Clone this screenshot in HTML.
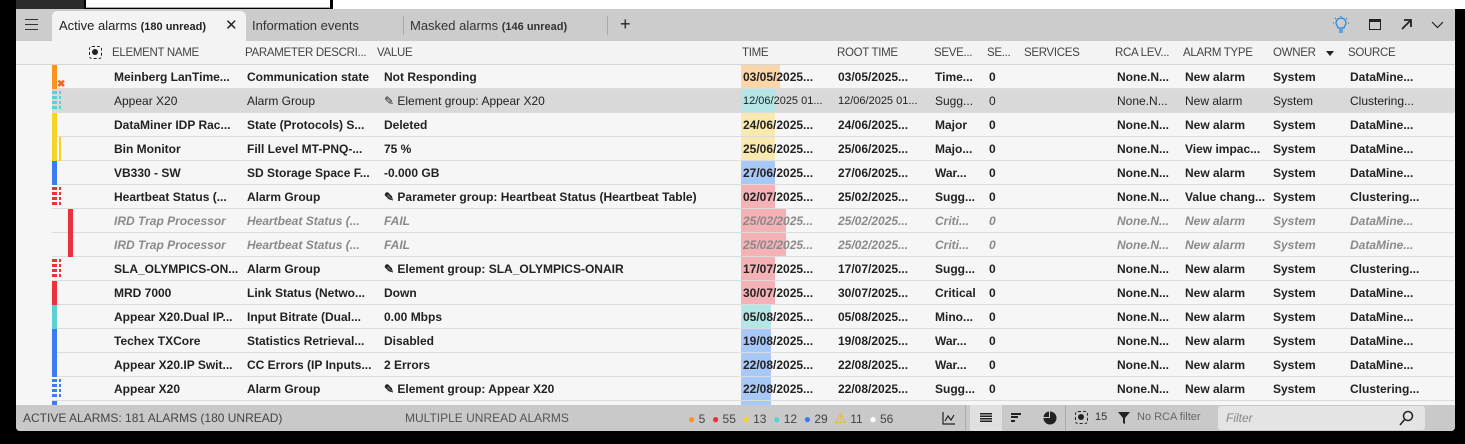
<!DOCTYPE html>
<html><head><meta charset="utf-8"><style>
*{box-sizing:border-box;margin:0;padding:0}
body{width:1465px;height:444px;background:#000;position:relative;overflow:hidden;font-family:"Liberation Sans",sans-serif;font-size:12px;color:#222}
.a{position:absolute;white-space:nowrap}
.row{position:absolute;left:52px;width:1403px;height:24px;border-bottom:1px solid #dcdcdc}
.row span{position:absolute;top:5px;white-space:nowrap}
.b span{font-weight:bold}
.i span{font-style:italic;color:#8a8a8a;font-weight:bold}
.hd{position:absolute;top:47px;color:#444;font-size:11.5px;letter-spacing:-0.3px}
.tb{position:absolute;top:0;height:23px;width:38px;left:689px}
.bar{position:absolute;left:0;top:0;width:5px;height:24px}
.dot{position:absolute;top:2px;width:5px;height:20px;background:repeating-linear-gradient(#000 0 3px,transparent 3px 5px)}
</style></head><body>
<div class="a" style="left:16px;top:0;width:68px;height:9px;background:#2b2b2b"></div>
<div class="a" style="left:86px;top:0;width:244px;height:8px;background:#fff;border-bottom:1px solid #aaa"></div>
<div class="a" style="left:333px;top:0;width:1132px;height:9px;background:#fff"></div>
<div class="a" style="left:16px;top:9px;width:1439px;height:422px;background:#f6f6f6;border-radius:0 0 4px 4px"></div>
<div class="a" style="left:16px;top:9px;width:1439px;height:32px;background:#cccccc"></div>
<div class="a" style="left:25px;top:19px;width:13px;height:11px;border-top:1px solid #333;border-bottom:1px solid #333"><div style="margin-top:4px;height:1px;background:#333"></div></div>
<div class="a" style="left:52px;top:11px;width:194px;height:30px;background:#f3f3f3;border-radius:5px 5px 0 0"></div>
<div class="a" style="left:59px;top:18px;font-size:13px;color:#222">Active alarms <b style="font-size:11px">(180 unread)</b></div>
<div class="a" style="left:225px;top:16px;font-size:15px;color:#222">✕</div>
<div class="a" style="left:252px;top:18px;font-size:13px;color:#333">Information events</div>
<div class="a" style="left:403px;top:16px;width:1px;height:19px;background:#aaa"></div>
<div class="a" style="left:410px;top:18px;font-size:13px;color:#333">Masked alarms <b style="font-size:11px">(146 unread)</b></div>
<div class="a" style="left:607px;top:16px;width:1px;height:19px;background:#aaa"></div>
<div class="a" style="left:620px;top:14px;font-size:18px;color:#222">+</div>
<svg class="a" style="left:1333px;top:16px" width="16" height="18" viewBox="0 0 16 18"><g stroke="#1e88e5" fill="none" stroke-width="1.2"><path d="M5 12c0-2-2-3-2-5a5 5 0 0 1 10 0c0 2-2 3-2 5z"/><path d="M6 14h4M6 16h4M1 7h-1M16 7h-1M2 2l1 1M14 2l-1 1M8 0v1"/></g></svg>
<div class="a" style="left:1369px;top:19px;width:12px;height:11px;border:1.5px solid #222;border-top-width:3px"></div>
<svg class="a" style="left:1400px;top:18px" width="12" height="12"><path d="M2 11L10 3M4 2h7v7" stroke="#222" fill="none" stroke-width="1.8"/></svg>
<svg class="a" style="left:1431px;top:21px" width="13" height="8"><path d="M1 1l5.5 5.5L12 1" stroke="#222" fill="none" stroke-width="1.2"/></svg>
<div class="a" style="left:16px;top:41px;width:1439px;height:24px;background:#f3f3f3;border-bottom:1px solid #d6d6d6"></div>
<div class="a" style="left:89px;top:46px;width:13px;height:13px;border:1.5px dashed #222;border-radius:3px"><div style="margin:2px;width:6px;height:6px;border-radius:50%;background:#222"></div></div>
<div class="hd" style="left:112px">ELEMENT NAME</div>
<div class="hd" style="left:245px">PARAMETER DESCRI...</div>
<div class="hd" style="left:377px">VALUE</div>
<div class="hd" style="left:742px">TIME</div>
<div class="hd" style="left:837px">ROOT TIME</div>
<div class="hd" style="left:934px">SEVE...</div>
<div class="hd" style="left:987px">SE...</div>
<div class="hd" style="left:1024px">SERVICES</div>
<div class="hd" style="left:1115px">RCA LEV...</div>
<div class="hd" style="left:1183px">ALARM TYPE</div>
<div class="hd" style="left:1273px">OWNER</div>
<div class="a" style="left:1326px;top:51px;border:4px solid transparent;border-top:5px solid #222"></div>
<div class="hd" style="left:1348px">SOURCE</div>

<div class="row b" style="top:65px"><div class="bar" style="background:#f7931e"></div><div class="a" style="left:5px;top:14px;color:#f26522;font-size:10px;font-weight:bold">✖</div><div class="tb" style="background:#fbd6a8;width:39px"></div><span style="left:62px">Meinberg LanTime...</span><span style="left:195px">Communication state</span><span style="left:332px">Not Responding</span><span style="left:691px">03/05/2025...</span><span style="left:786px">03/05/2025...</span><span style="left:883px">Time...</span><span style="left:937px">0</span><span style="left:1065px">None.N...</span><span style="left:1133px">New alarm</span><span style="left:1221px">System</span><span style="left:1298px">DataMine...</span></div>
<div class="row" style="top:89px;background:#d9d9d9"><div class="dot" style="left:0;background:repeating-linear-gradient(#5ed0d4 0 3px,transparent 3px 5px)"></div><div class="dot" style="left:7px;width:2px;background:repeating-linear-gradient(#5ed0d4 0 3px,transparent 3px 5px)"></div><div class="tb" style="background:#b4e6e6;width:35px"></div><span style="left:62px">Appear X20</span><span style="left:195px">Alarm Group</span><span style="left:332px">✎ Element group: Appear X20</span><span style="left:691px;font-size:11px;top:6px">12/06/2025 01...</span><span style="left:786px;font-size:11px;top:6px">12/06/2025 01...</span><span style="left:883px">Sugg...</span><span style="left:937px">0</span><span style="left:1065px">None.N...</span><span style="left:1133px">New alarm</span><span style="left:1221px">System</span><span style="left:1298px">Clustering...</span></div>
<div class="row b" style="top:113px"><div class="bar" style="background:#f5d327"></div><div class="tb" style="background:#f8e9b0;width:34px"></div><span style="left:62px">DataMiner IDP Rac...</span><span style="left:195px">State (Protocols) S...</span><span style="left:332px">Deleted</span><span style="left:691px">24/06/2025...</span><span style="left:786px">24/06/2025...</span><span style="left:883px">Major</span><span style="left:937px">0</span><span style="left:1065px">None.N...</span><span style="left:1133px">New alarm</span><span style="left:1221px">System</span><span style="left:1298px">DataMine...</span></div>
<div class="row b" style="top:137px"><div class="bar" style="background:#f5d327"></div><div class="bar" style="left:7px;width:2px;background:#f5d327"></div><div class="tb" style="background:#f8e9b0;width:34px"></div><span style="left:62px">Bin Monitor</span><span style="left:195px">Fill Level MT-PNQ-...</span><span style="left:332px">75 %</span><span style="left:691px">25/06/2025...</span><span style="left:786px">25/06/2025...</span><span style="left:883px">Majo...</span><span style="left:937px">0</span><span style="left:1065px">None.N...</span><span style="left:1133px">View impac...</span><span style="left:1221px">System</span><span style="left:1298px">DataMine...</span></div>
<div class="row b" style="top:161px"><div class="bar" style="background:#3d7cf0"></div><div class="tb" style="background:#a8c8f8;width:34px"></div><span style="left:62px">VB330 - SW</span><span style="left:195px">SD Storage Space F...</span><span style="left:332px">-0.000 GB</span><span style="left:691px">27/06/2025...</span><span style="left:786px">27/06/2025...</span><span style="left:883px">War...</span><span style="left:937px">0</span><span style="left:1065px">None.N...</span><span style="left:1133px">New alarm</span><span style="left:1221px">System</span><span style="left:1298px">DataMine...</span></div>
<div class="row b" style="top:185px"><div class="dot" style="left:0;background:repeating-linear-gradient(#e8323c 0 3px,transparent 3px 5px)"></div><div class="dot" style="left:7px;width:2px;background:repeating-linear-gradient(#e8323c 0 3px,transparent 3px 5px)"></div><div class="tb" style="background:#f4b1b6;width:34px"></div><span style="left:62px">Heartbeat Status (...</span><span style="left:195px">Alarm Group</span><span style="left:332px">✎ Parameter group: Heartbeat Status (Heartbeat Table)</span><span style="left:691px">02/07/2025...</span><span style="left:786px">25/02/2025...</span><span style="left:883px">Sugg...</span><span style="left:937px">0</span><span style="left:1065px">None.N...</span><span style="left:1133px">Value chang...</span><span style="left:1221px">System</span><span style="left:1298px">Clustering...</span></div>
<div class="row i" style="top:209px"><div class="bar" style="left:16px;background:#e8323c"></div><div class="tb" style="background:#f4b1b6;width:45px"></div><span style="left:62px">IRD Trap Processor</span><span style="left:195px">Heartbeat Status (...</span><span style="left:332px">FAIL</span><span style="left:691px">25/02/2025...</span><span style="left:786px">25/02/2025...</span><span style="left:883px">Criti...</span><span style="left:937px">0</span><span style="left:1065px">None.N...</span><span style="left:1133px">New alarm</span><span style="left:1221px">System</span><span style="left:1298px">DataMine...</span></div>
<div class="row i" style="top:233px"><div class="bar" style="left:16px;background:#e8323c"></div><div class="tb" style="background:#f4b1b6;width:45px"></div><span style="left:62px">IRD Trap Processor</span><span style="left:195px">Heartbeat Status (...</span><span style="left:332px">FAIL</span><span style="left:691px">25/02/2025...</span><span style="left:786px">25/02/2025...</span><span style="left:883px">Criti...</span><span style="left:937px">0</span><span style="left:1065px">None.N...</span><span style="left:1133px">New alarm</span><span style="left:1221px">System</span><span style="left:1298px">DataMine...</span></div>
<div class="row b" style="top:257px"><div class="dot" style="left:0;background:repeating-linear-gradient(#e8323c 0 3px,transparent 3px 5px)"></div><div class="dot" style="left:7px;width:2px;background:repeating-linear-gradient(#e8323c 0 3px,transparent 3px 5px)"></div><div class="tb" style="background:#f4b1b6;width:34px"></div><span style="left:62px">SLA_OLYMPICS-ON...</span><span style="left:195px">Alarm Group</span><span style="left:332px">✎ Element group: SLA_OLYMPICS-ONAIR</span><span style="left:691px">17/07/2025...</span><span style="left:786px">17/07/2025...</span><span style="left:883px">Sugg...</span><span style="left:937px">0</span><span style="left:1065px">None.N...</span><span style="left:1133px">New alarm</span><span style="left:1221px">System</span><span style="left:1298px">Clustering...</span></div>
<div class="row b" style="top:281px"><div class="bar" style="background:#e8323c"></div><div class="tb" style="background:#f4b1b6;width:34px"></div><span style="left:62px">MRD 7000</span><span style="left:195px">Link Status (Netwo...</span><span style="left:332px">Down</span><span style="left:691px">30/07/2025...</span><span style="left:786px">30/07/2025...</span><span style="left:883px">Critical</span><span style="left:937px">0</span><span style="left:1065px">None.N...</span><span style="left:1133px">New alarm</span><span style="left:1221px">System</span><span style="left:1298px">DataMine...</span></div>
<div class="row b" style="top:305px"><div class="bar" style="background:#5ed0d4"></div><div class="tb" style="background:#b4e6e6;width:30px"></div><span style="left:62px">Appear X20.Dual IP...</span><span style="left:195px">Input Bitrate (Dual...</span><span style="left:332px">0.00 Mbps</span><span style="left:691px">05/08/2025...</span><span style="left:786px">05/08/2025...</span><span style="left:883px">Mino...</span><span style="left:937px">0</span><span style="left:1065px">None.N...</span><span style="left:1133px">New alarm</span><span style="left:1221px">System</span><span style="left:1298px">DataMine...</span></div>
<div class="row b" style="top:329px"><div class="bar" style="background:#3d7cf0"></div><div class="tb" style="background:#a8c8f8;width:30px"></div><span style="left:62px">Techex TXCore</span><span style="left:195px">Statistics Retrieval...</span><span style="left:332px">Disabled</span><span style="left:691px">19/08/2025...</span><span style="left:786px">19/08/2025...</span><span style="left:883px">War...</span><span style="left:937px">0</span><span style="left:1065px">None.N...</span><span style="left:1133px">New alarm</span><span style="left:1221px">System</span><span style="left:1298px">DataMine...</span></div>
<div class="row b" style="top:353px"><div class="bar" style="background:#3d7cf0"></div><div class="tb" style="background:#a8c8f8;width:30px"></div><span style="left:62px">Appear X20.IP Swit...</span><span style="left:195px">CC Errors (IP Inputs...</span><span style="left:332px">2 Errors</span><span style="left:691px">22/08/2025...</span><span style="left:786px">22/08/2025...</span><span style="left:883px">War...</span><span style="left:937px">0</span><span style="left:1065px">None.N...</span><span style="left:1133px">New alarm</span><span style="left:1221px">System</span><span style="left:1298px">DataMine...</span></div>
<div class="row b" style="top:377px"><div class="dot" style="left:0;background:repeating-linear-gradient(#3d7cf0 0 3px,transparent 3px 5px)"></div><div class="dot" style="left:7px;width:2px;background:repeating-linear-gradient(#3d7cf0 0 3px,transparent 3px 5px)"></div><div class="tb" style="background:#a8c8f8;width:30px"></div><span style="left:62px">Appear X20</span><span style="left:195px">Alarm Group</span><span style="left:332px">✎ Element group: Appear X20</span><span style="left:691px">22/08/2025...</span><span style="left:786px">22/08/2025...</span><span style="left:883px">Sugg...</span><span style="left:937px">0</span><span style="left:1065px">None.N...</span><span style="left:1133px">New alarm</span><span style="left:1221px">System</span><span style="left:1298px">Clustering...</span></div>
<div class="a" style="left:52px;top:401px;width:5px;height:4px;background:#3d7cf0"></div>
<div class="a" style="left:741px;top:401px;width:30px;height:4px;background:#a8c8f8"></div>

<div class="a" style="left:16px;top:405px;width:1439px;height:26px;background:#c9c9c9;border-radius:0 0 4px 4px"></div>
<div class="a" style="left:23px;top:411px;color:#444;font-size:12px">ACTIVE ALARMS: 181 ALARMS (180 UNREAD)</div>
<div class="a" style="left:405px;top:411px;color:#555;font-size:12px">MULTIPLE UNREAD ALARMS</div>
<div class="a" style="left:688px;top:410px;font-size:12px;color:#444"><span style="color:#f7931e">●</span> 5 &nbsp;<span style="color:#e8323c">●</span> 55 &nbsp;<span style="color:#f5d327">●</span> 13 &nbsp;<span style="color:#5ed0d4">●</span> 12 &nbsp;<span style="color:#3d7cf0">●</span> 29 &nbsp;<span style="color:#f5b800;font-size:14px">⚠</span> 11 &nbsp;<span style="color:#fff">●</span> 56</div>
<svg class="a" style="left:942px;top:412px" width="13" height="13"><path d="M1 0v12h12M3 9l3-5 3 4 3-5" stroke="#222" fill="none" stroke-width="1.2"/></svg>
<div class="a" style="left:965px;top:405px;width:1px;height:26px;background:#aaa"></div>
<div class="a" style="left:970px;top:405px;width:32px;height:26px;background:#e0e0e0"></div>
<div class="a" style="left:980px;top:413px;width:12px;height:9px;background:repeating-linear-gradient(#222 0 1.5px,transparent 1.5px 2.5px)"></div>
<div class="a" style="left:1011px;top:413px;width:10px;height:2px;background:#222"></div>
<div class="a" style="left:1011px;top:416px;width:7px;height:2px;background:#222"></div>
<div class="a" style="left:1011px;top:420px;width:4px;height:2px;background:#222"></div>
<svg class="a" style="left:1043px;top:411px" width="14" height="14"><path d="M7 7V0.5A6.5 6.5 0 1 1 0.5 7z" fill="#222"/><path d="M6 6V0.5A6 6 0 0 0 0.5 6z" fill="#222"/></svg>
<div class="a" style="left:1065px;top:405px;width:1px;height:26px;background:#aaa"></div>
<div class="a" style="left:1075px;top:411px;width:13px;height:13px;border:1.5px dashed #222;border-radius:3px"><div style="margin:2px;width:6px;height:6px;border-radius:50%;background:#222"></div></div>
<div class="a" style="left:1095px;top:411px;font-size:11px;color:#333">15</div>
<svg class="a" style="left:1118px;top:412px" width="12" height="12"><path d="M0 0h12L7 6v6L5 11V6z" fill="#222"/></svg>
<div class="a" style="left:1137px;top:411px;font-size:11px;color:#666">No RCA filter</div>
<div class="a" style="left:1218px;top:406px;width:207px;height:24px;background:#e4e4e4;border-radius:3px"></div>
<div class="a" style="left:1226px;top:411px;font-size:12px;color:#888;font-style:italic">Filter</div>
<svg class="a" style="left:1398px;top:410px" width="16" height="16"><circle cx="10" cy="6" r="4.5" stroke="#222" fill="none" stroke-width="1.5"/><path d="M7 9l-5 6" stroke="#222" stroke-width="1.5"/></svg>
</body></html>
